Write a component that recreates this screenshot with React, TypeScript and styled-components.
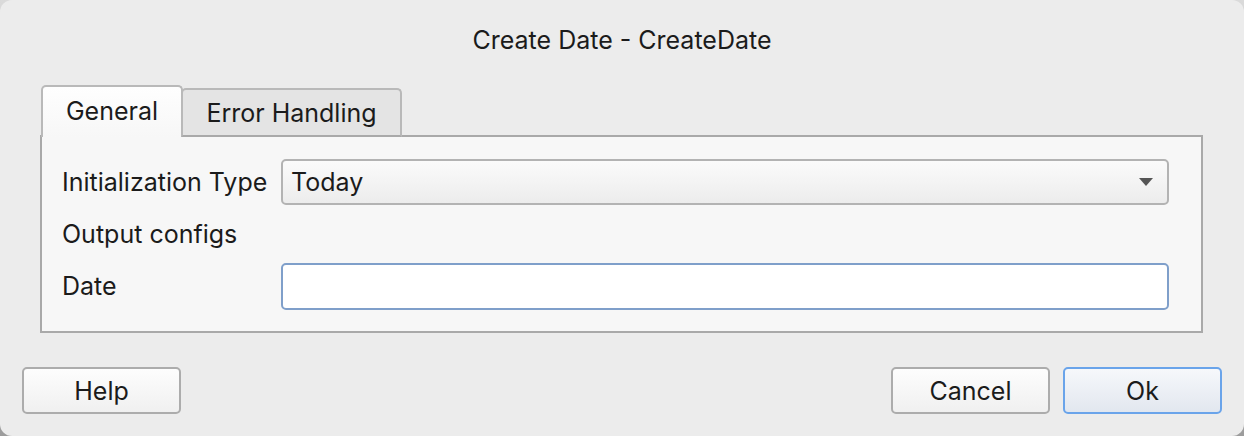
import React from "react";
import styled, { createGlobalStyle } from "styled-components";

const Global = createGlobalStyle`
  html, body { margin: 0; padding: 0; }
  body {
    width: 1244px;
    height: 436px;
    overflow: hidden;
    background: linear-gradient(#dadada, #9c9c9c);
    font-family: Inter, "Liberation Sans", Arial, sans-serif;
    color: #1b1b1b;
  }
  * { box-sizing: border-box; }
`;

const Window = styled.div`
  width: 1244px;
  height: 436px;
  background: #ececec;
  border-radius: 12px;
  display: flex;
  flex-direction: column;
`;

const Title = styled.div`
  height: 86px;
  display: flex;
  justify-content: center;
  padding-top: 26px;
  font-size: 25px;
  line-height: 28px;
`;

const Content = styled.div`
  padding: 0 41px 0 40px;
  display: flex;
  flex-direction: column;
`;

const TabBar = styled.div`
  display: flex;
  align-items: flex-end;
  padding-left: 1px;
  height: 51px;
  position: relative;
  z-index: 1;
  margin-bottom: -2px;
`;

const Tab = styled.div<{ $active?: boolean }>`
  height: ${(p) => (p.$active ? "52px" : "49px")};
  width: ${(p) => (p.$active ? "142px" : "221px")};
  display: flex;
  align-items: center;
  justify-content: center;
  font-size: 25px;
  border: 2px solid #b9b9b9;
  border-bottom: ${(p) => (p.$active ? "none" : "2px solid #a9a9a9")};
  border-radius: 5px 5px 0 0;
  background: ${(p) =>
    p.$active ? "linear-gradient(#fefefe, #f7f7f7)" : "#e4e4e4"};
  margin-left: ${(p) => (p.$active ? "0" : "-2px")};
  padding-bottom: ${(p) => (p.$active ? "3px" : "0")};
`;

const Panel = styled.div`
  height: 198px;
  border: 2px solid #a9a9a9;
  background: #f7f7f7;
  padding: 22px 32px 0 20px;
  display: grid;
  grid-template-columns: 219px 1fr;
  grid-auto-rows: 46px;
  row-gap: 6px;
  align-items: center;
`;

const Label = styled.div`
  font-size: 25px;
  white-space: nowrap;
`;

const Combo = styled.div`
  height: 46px;
  border: 2px solid #b3b3b3;
  border-radius: 5px;
  background: linear-gradient(#fbfbfb, #ececec);
  display: flex;
  align-items: center;
  justify-content: space-between;
  padding: 0 14px 0 8px;
  font-size: 25px;
`;

const Arrow = styled.span`
  width: 0;
  height: 0;
  border-left: 7px solid transparent;
  border-right: 7px solid transparent;
  border-top: 8px solid #555;
`;

const Input = styled.input`
  height: 47px;
  width: 100%;
  border: 2px solid #7f9fca;
  border-radius: 5px;
  background: #fff;
  outline: none;
  font: inherit;
  font-size: 25px;
  padding: 0 8px;
`;

const Footer = styled.div`
  display: flex;
  align-items: center;
  padding: 34px 22px 0 22px;
  gap: 13px;
`;

const Spacer = styled.div`
  flex: 1;
`;

const Button = styled.button<{ $primary?: boolean }>`
  width: 159px;
  height: 47px;
  border-radius: 5px;
  border: 2px solid ${(p) => (p.$primary ? "#6aa4ea" : "#acacac")};
  background: ${(p) =>
    p.$primary
      ? "linear-gradient(#f6f8fb, #e2e7ef)"
      : "linear-gradient(#fdfdfd, #f0f0f0)"};
  font-family: inherit;
  font-size: 25px;
  color: #1b1b1b;
  padding: 0;
`;

export default function App() {
  return (
    <>
      <Global />
      <Window>
        <Title>Create Date - CreateDate</Title>
        <Content>
          <TabBar>
            <Tab $active>General</Tab>
            <Tab>Error Handling</Tab>
          </TabBar>
          <Panel>
            <Label>Initialization Type</Label>
            <Combo>
              <span>Today</span>
              <Arrow />
            </Combo>
            <Label>Output configs</Label>
            <div />
            <Label>Date</Label>
            <Input defaultValue="" />
          </Panel>
        </Content>
        <Footer>
          <Button>Help</Button>
          <Spacer />
          <Button>Cancel</Button>
          <Button $primary>Ok</Button>
        </Footer>
      </Window>
    </>
  );
}
